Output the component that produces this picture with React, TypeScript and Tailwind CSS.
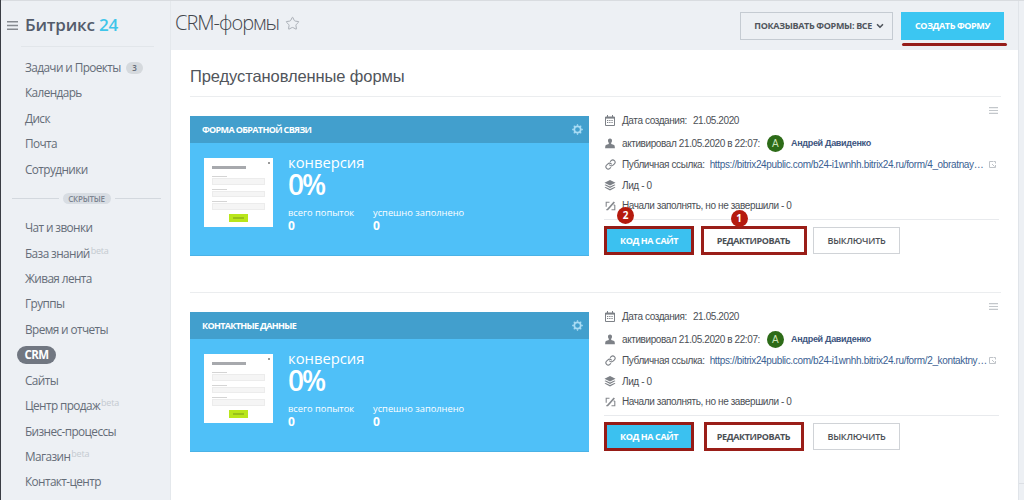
import type { ReactNode } from 'react'
import { Star, Link, ChevronDown } from 'lucide-react'

interface MenuItem {
  title: string
  beta?: boolean
  counter?: number
  active?: boolean
}

interface CrmForm {
  title: string
  created: string
  activated: string
  user: string
  link: string
  marks?: boolean
}

const mainMenu: MenuItem[] = [
  { title: 'Задачи и Проекты', counter: 3 },
  { title: 'Календарь' },
  { title: 'Диск' },
  { title: 'Почта' },
  { title: 'Сотрудники' },
]

const hiddenMenu: MenuItem[] = [
  { title: 'Чат и звонки' },
  { title: 'База знаний', beta: true },
  { title: 'Живая лента' },
  { title: 'Группы' },
  { title: 'Время и отчеты' },
  { title: 'CRM', active: true },
  { title: 'Сайты' },
  { title: 'Центр продаж', beta: true },
  { title: 'Бизнес-процессы' },
  { title: 'Магазин', beta: true },
  { title: 'Контакт-центр' },
]

const forms: CrmForm[] = [
  {
    title: 'Форма обратной связи',
    created: '21.05.2020',
    activated: '21.05.2020 в 22:07:',
    user: 'Андрей Давиденко',
    link: 'https://bitrix24public.com/b24-i1wnhh.bitrix24.ru/form/4_obratnay…',
    marks: true,
  },
  {
    title: 'Контактные данные',
    created: '21.05.2020',
    activated: '21.05.2020 в 22:07:',
    user: 'Андрей Давиденко',
    link: 'https://bitrix24public.com/b24-i1wnhh.bitrix24.ru/form/2_kontaktny…',
  },
]

function BurgerIcon() {
  return (
    <svg width="11" height="9" viewBox="0 0 11 9" fill="#85898f" className="shrink-0">
      <path d="M0 0h11v1.600H0zM0 3.700h11v1.600H0zM0 7.400h11V9H0z" />
    </svg>
  )
}

function RowMenuIcon() {
  return (
    <svg width="9" height="7" viewBox="0 0 9 7" fill="#c3c7cb">
      <path d="M0 0h9v1.200H0zM0 2.900h9v1.200H0zM0 5.800h9V7H0z" />
    </svg>
  )
}

function GearIcon() {
  return (
    <svg width="11" height="11" viewBox="0 0 11 11" fill="none" stroke="#a9dcf4">
      <circle cx="5.500" cy="5.500" r="3.200" strokeWidth="1.700" />
      <path
        d="M5.500.2v1.600M5.500 9.200v1.600M.2 5.500h1.600M9.200 5.500h1.600M1.800 1.800l1.100 1.100M8.100 8.100l1.100 1.100M9.200 1.800L8.100 2.900M2.900 8.100L1.800 9.200"
        strokeWidth="1.300"
      />
    </svg>
  )
}

function CalendarIcon() {
  return (
    <svg width="10" height="11" viewBox="0 0 10 11" fill="none" stroke="#7d8187">
      <path d="M.5 2h9v8.5h-9z" />
      <path d="M.5 2.8h9" strokeWidth="1.6" />
      <path d="M2.5 0v2M7.500 0v2" />
      <path d="M2 5.500h6M2 7.500h6" strokeDasharray="1.300 .9" />
    </svg>
  )
}

function UserIcon() {
  return (
    <svg width="10" height="11" viewBox="0 0 10 11" fill="#7d8187">
      <path d="M5 .5c1.500 0 2.100 1 2 2.200 0 1-.5 1.700-.8 2.100v1.100l2.300.9c.8.300 1.100.8 1.200 1.500l.2 1.900H.1l.2-1.900c.1-.7.400-1.200 1.200-1.500l2.300-.9V4.800C3.500 4.400 3 3.700 3 2.700 2.900 1.500 3.500.5 5 .5z" />
    </svg>
  )
}

function LayersIcon() {
  return (
    <svg width="12" height="11" viewBox="0 0 12 11" fill="#7d8187">
      <path d="M6 0l5.500 2.700L6 5.400.5 2.700z" />
      <path d="M1.700 4.400L6 6.500l4.300-2.100 1.200.7L6 7.900.5 5.100z" />
      <path d="M1.700 7L6 9.100 10.300 7l1.200.6L6 10.400.5 7.600z" />
    </svg>
  )
}

function UnfinishedIcon() {
  return (
    <svg width="11" height="10" viewBox="0 0 11 10" fill="none" stroke="#85888d" strokeWidth="1.100">
      <path d="M4.500 1.300H1.200v4.500M9.800 4v4.700H6.500M9.800 4L8.500 4M1.200 8.700h1" />
      <path d="M2.200 9L9.300 1" strokeWidth="1.700" />
    </svg>
  )
}

function EditLinkIcon() {
  return (
    <svg width="7" height="7" viewBox="0 0 7 7" fill="none" stroke="#bfc3c8" className="shrink-0">
      <path d="M4 .5H.5v6h6V4" />
      <path d="M3 3l2.500 2.500M4.500 .5h2v2" />
    </svg>
  )
}

function SideItem({ item }: { item: MenuItem }) {
  if (item.active) {
    return (
      <li className="flex h-[25.45px] items-center">
        <span className="-ml-2 flex h-[18px] w-[39px] items-center justify-center rounded-full bg-[#717781] text-[11.5px] font-bold tracking-[-0.6px] text-white">
          {item.title}
        </span>
      </li>
    )
  }
  return (
    <li className="flex h-[25.45px] items-center text-[11.8px] tracking-[-0.6px] text-[#656d78]">
      <span>{item.title}</span>
      {item.beta && <span className="mb-1.5 ml-px text-[9px] leading-none tracking-[-0.2px] text-[#c4cad0]">beta</span>}
      {item.counter && (
        <span className="ml-[5px] flex h-3 w-[17px] items-center justify-center rounded-full bg-[#d5d9dd] text-[8px] font-semibold">
          {item.counter}
        </span>
      )}
    </li>
  )
}

function Sidebar() {
  return (
    <aside className="w-[170px] shrink-0 border-r border-[#e4e8ec] pt-2.5">
      <div className="flex h-7 items-center pl-1.5">
        <BurgerIcon />
        <span className="ml-[7px] text-[17px] font-semibold whitespace-nowrap tracking-[-0.2px] text-[#545c6b]">
          Битрикс <span className="text-[#3fc5ea]">24</span>
        </span>
      </div>
      <div className="mt-[7px] ml-5 h-px w-[133px] bg-[#e2e6ea]" />
      <ul className="mt-[8px] pl-[24px]">
        {mainMenu.map(item => (
          <SideItem key={item.title} item={item} />
        ))}
      </ul>
      <div className="mt-[10px] mr-[9px] ml-[11px] flex h-[13px] items-center gap-1">
        <div className="h-px flex-1 bg-[#d3d8de]" />
        <span className="flex h-[11px] w-[48px] items-center justify-center rounded-full bg-[#d8dde3] text-[8px] font-semibold tracking-[-0.2px] text-[#7d8591] uppercase">
          Скрытые
        </span>
        <div className="h-px flex-1 bg-[#d3d8de]" />
      </div>
      <ul className="mt-[10px] pl-[24px]">
        {hiddenMenu.map(item => (
          <SideItem key={item.title} item={item} />
        ))}
      </ul>
    </aside>
  )
}

// Small preview of the form itself
function FormThumb() {
  return (
    <div className="relative h-[69px] w-[69px] shrink-0 bg-white px-2 pt-2">
      <span className="absolute top-1 right-[3px] h-[2px] w-[2px] bg-[#9a9a9a]" />
      <div className="mb-[7px] h-[3px] w-[34px] bg-[#a7a9ad]" />
      {[0, 1, 2].map(i => (
        <div key={i} className="mb-[4px]">
          <div className="h-px w-[15px] bg-[#d4d4d4]" />
          <div className="mt-[1px] h-[6.5px] w-[53px] border border-[#ececec] bg-[#f5f5f5]" />
        </div>
      ))}
      <div className="mx-auto mt-[1px] flex h-2 w-[19px] items-center justify-center bg-[#b9e61b]">
        <div className="h-[2px] w-[11px] bg-[#99c01a]" />
      </div>
    </div>
  )
}

function StatCard({ title }: { title: string }) {
  return (
    <div className="h-[140px] w-[399px] shrink-0 border-b border-[#4ab2e6] bg-[#4fc0f8] text-white">
      <div className="flex h-[27px] items-center justify-between bg-[#429fcd] pr-[6px] pl-3">
        <span className="text-[9px] font-bold tracking-[-0.65px] uppercase">{title}</span>
        <GearIcon />
      </div>
      <div className="flex pt-[15px] pl-[14px]">
        <FormThumb />
        <div className="-mt-[6px] ml-[15px]">
          <div className="text-[14.8px] leading-[20px]">конверсия</div>
          <div className="text-[28px] leading-[25px] font-semibold tracking-[-2px]">0%</div>
          <div className="mt-[10px] flex text-[9.3px] leading-[12px]">
            <div className="w-[85px]">
              всего попыток
              <div className="text-[12px] leading-[14px] font-bold">0</div>
            </div>
            <div className="whitespace-nowrap">
              успешно заполнено
              <div className="text-[12px] leading-[14px] font-bold">0</div>
            </div>
          </div>
        </div>
      </div>
    </div>
  )
}

function InfoRow({ icon, children }: { icon: ReactNode; children: ReactNode }) {
  return (
    <div className="flex h-[21px] items-center">
      <span className="flex w-[12px] shrink-0 justify-center">{icon}</span>
      <span className="ml-[6px] flex items-center whitespace-nowrap">{children}</span>
    </div>
  )
}

function FormRow({ form }: { form: CrmForm }) {
  return (
    <div className="flex h-[196.300px] border-t border-[#ebedef] pt-[19px]">
      <StatCard title={form.title} />
      <div className="ml-[15px] w-[395px] font-['Liberation_Sans',sans-serif] text-[10px] tracking-[-0.4px] text-[#4c5056]">
        <div className="-mt-[9px] flex h-[7px] justify-end pr-px">
          <RowMenuIcon />
        </div>
        <div className="-mt-[4px] h-[109px]">
          <InfoRow icon={<CalendarIcon />}>
            Дата создания: <span className="ml-[6px]">{form.created}</span>
          </InfoRow>
          <div className="pt-[2px]">
            <InfoRow icon={<UserIcon />}>
              активировал {form.activated}
              <span className="mx-[7px] flex h-[17px] w-[17px] items-center justify-center rounded-full bg-[#2d6b18] text-[10px] tracking-normal text-[#cbe3b8]">
                A
              </span>
              <b className="text-[9px] tracking-[-0.3px] text-[#3d5580]">{form.user}</b>
            </InfoRow>
          </div>
          <InfoRow icon={<Link size={11} strokeWidth={2.4} className="text-[#7d8187]" />}>
            Публичная ссылка:{' '}
            <span className="ml-[5px] w-[279px] tracking-[-0.35px] text-[#3b5f93]">{form.link}</span>
            <EditLinkIcon />
          </InfoRow>
          <InfoRow icon={<LayersIcon />}>Лид - 0</InfoRow>
          <div className="-mt-[1px]">
            <InfoRow icon={<UnfinishedIcon />}>Начали заполнять, но не завершили - 0</InfoRow>
          </div>
        </div>
        <div className="h-px bg-[#e8eaed]" />
        <div className="mt-[6px] flex items-center font-['Open_Sans',sans-serif] text-[9px] font-bold">
          <div className="relative flex h-[29px] w-[90px] items-center justify-center border-[3px] border-[#961b16] bg-[#3bc1f0] text-white">
            КОД НА САЙТ
            {form.marks && (
              <span className="absolute -top-[22px] left-[10px] flex h-[17px] w-[17px] items-center justify-center rounded-full bg-[#b51a0e] text-[10px] tracking-normal">
                2
              </span>
            )}
          </div>
          <div className="flex w-[119px] justify-center">
            <div
              className={
                form.marks
                  ? 'relative flex h-[29px] w-[106px] items-center justify-center border-[3px] border-[#9a1e18]'
                  : 'flex h-[29px] w-[100px] items-center justify-center border-[3px] border-[#9a1e18]'
              }
            >
              РЕДАКТИРОВАТЬ
              {form.marks && (
                <span className="absolute -top-[19px] left-[27px] flex h-[17px] w-[17px] items-center justify-center rounded-full bg-[#b51a0e] text-[10px] tracking-normal text-white">
                  1
                </span>
              )}
            </div>
          </div>
          <div className="flex h-[27px] w-[87px] items-center justify-center border border-[#d0d3d7] font-semibold tracking-[-0.2px]">
            ВЫКЛЮЧИТЬ
          </div>
        </div>
      </div>
    </div>
  )
}

export default function App() {
  return (
    <div className="flex h-[500px] w-[1024px] overflow-hidden border-l border-[#3a3d44] bg-[#edf0f4] font-['Open_Sans',sans-serif]">
      <div className="flex w-full border-t border-[#d9dce0]">
        <Sidebar />
        <main className="w-[847px] shrink-0">
          <header className="flex h-[49px] items-center pl-1">
            <h1 className="-mt-[5px] text-[20px] font-light tracking-[-1px] text-[#42464c]">CRM-формы</h1>
            <Star size={15} strokeWidth={1.5} className="-mt-1 ml-1.5 text-[#a5abb2]" />
            <button className="ml-auto flex h-7 w-[153px] items-center justify-end gap-[3px] border border-[#c5cbd2] pr-[7px] text-[9px] font-bold tracking-[-0.33px] text-[#51565d]">
              ПОКАЗЫВАТЬ ФОРМЫ: ВСЕ
              <ChevronDown size={10} strokeWidth={4} />
            </button>
            <div className="relative mr-[14px] ml-2">
              <button className="flex h-7 w-[103px] items-center justify-center bg-[#3bc6f2] text-[9px] font-bold tracking-[-0.4px] text-white">
                СОЗДАТЬ ФОРМУ
              </button>
              <div className="absolute top-[31px] left-px h-[3px] w-[105px] rounded-full bg-[#951d1a]" />
            </div>
          </header>
          <section className="h-[450px] bg-white pr-[17px] pl-[19px]">
            <h2 className="flex h-[46px] items-center pt-[6px] font-['Liberation_Sans',sans-serif] text-[16.500px] tracking-[-0.1px] text-[#51555b]">
              Предустановленные формы
            </h2>
            {forms.map(form => (
              <FormRow key={form.title} form={form} />
            ))}
          </section>
        </main>
        <div className="flex-1 border-l border-[#e0e4e9] pt-[482px]">
          <div className="h-px bg-[#dcdfe4]" />
        </div>
      </div>
    </div>
  )
}
